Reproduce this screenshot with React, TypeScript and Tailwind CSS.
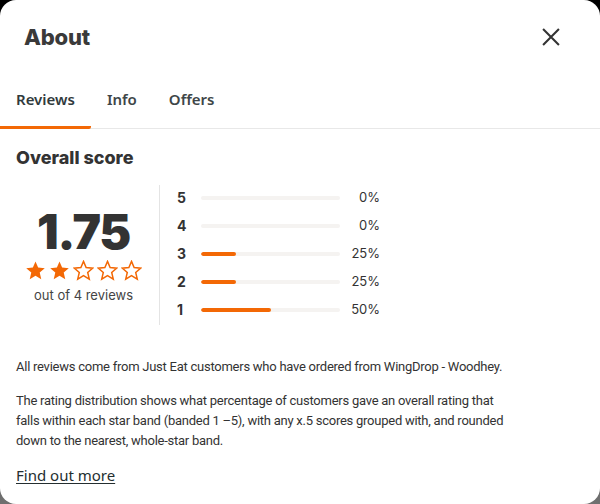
import React from 'react';

const ORANGE = '#f36805';

const Star: React.FC<{ filled: boolean }> = ({ filled }) => (
  <svg width="21" height="21" viewBox="0 0 24 24" className="shrink-0">
    <polygon
      points="12,1.6 15.0,8.7 22.6,9.3 16.8,14.3 18.6,21.9 12,17.9 5.4,21.9 7.2,14.3 1.4,9.3 9.0,8.7"
      fill={filled ? ORANGE : 'none'}
      stroke={ORANGE}
      strokeWidth={filled ? 0 : 1.7}
      strokeLinejoin="miter"
    />
  </svg>
);

const rows = [
  { band: 5, pct: 0 },
  { band: 4, pct: 0 },
  { band: 3, pct: 25 },
  { band: 2, pct: 25 },
  { band: 1, pct: 50 },
];

export default function App() {
  return (
    <div className="w-[600px] h-[504px] bg-gradient-to-b from-black to-[#707070]">
      <div
        className="w-full h-full bg-white rounded-[16px] flex flex-col text-[#242e30]"
        style={{ fontFamily: 'Roboto, sans-serif' }}
      >
        <div className="flex items-center justify-between pl-6 pr-[40px] h-[74px]">
          <h1 className="text-[22px] font-extrabold tracking-[-0.2px] text-[#3a3a3a]" style={{ fontFamily: 'Inter, sans-serif' }}>
            About
          </h1>
          <svg width="18" height="18" viewBox="0 0 20 20" className="text-[#333]">
            <path d="M2 2 L18 18 M18 2 L2 18" stroke="currentColor" strokeWidth="2.3" strokeLinecap="square" />
          </svg>
        </div>

        <div className="flex border-b border-[#e8e8e8] mt-[10px]" style={{ fontFamily: '"Noto Sans", sans-serif' }}>
          <div className="px-4 pt-[4px] pb-[15px] text-[15px] font-semibold text-[#303a3c] border-b-[3px] border-[#f36805] rounded-r-[2px] -mb-px">
            Reviews
          </div>
          <div className="px-4 pt-[4px] pb-[15px] text-[15px] font-semibold text-[#3e4648]">Info</div>
          <div className="px-4 pt-[4px] pb-[15px] text-[15px] font-semibold text-[#3e4648]">Offers</div>
        </div>

        <div className="px-4 pt-[18px]">
          <h2 className="text-[18px] font-extrabold text-[#333] leading-[22px]" style={{ fontFamily: 'Inter, sans-serif' }}>
            Overall score
          </h2>

          <div className="flex mt-[16px]">
            <div className="w-[144px] pr-[8px] flex flex-col items-center justify-center border-r border-[#e4e4e4] h-[140px]">
              <div className="text-[48px] font-black leading-[48px] tracking-[-1.2px] text-[#333] mt-[4px]" style={{ fontFamily: 'Inter, sans-serif' }}>
                1.75
              </div>
              <div className="flex gap-[3px] mt-[4px]">
                {[0, 1, 2, 3, 4].map(i => (
                  <Star key={i} filled={i < 2} />
                ))}
              </div>
              <div className="text-[13px] text-[#444] mt-[5px]" style={{ fontFamily: 'Inter, sans-serif' }}>
                out of 4 reviews
              </div>
            </div>

            <div className="flex flex-col justify-center gap-[12px] pl-[17px] -mt-[2px]" style={{ fontFamily: 'Inter, sans-serif' }}>
              {rows.map(r => (
                <div key={r.band} className="flex items-center h-[16px]">
                  <span className="w-[24px] text-[14px] font-bold text-[#333]">{r.band}</span>
                  <div className="w-[139px] h-[4px] rounded-full bg-[#f5f3f1] overflow-hidden">
                    <div className="h-full rounded-full bg-[#f36805]" style={{ width: `${r.pct}%` }} />
                  </div>
                  <span className="w-[40px] text-right text-[13px] text-[#333]">{r.pct}%</span>
                </div>
              ))}
            </div>
          </div>

          <p className="text-[13px] leading-[20px] tracking-[-0.25px] text-[#333] mt-[32px]">
            All reviews come from Just Eat customers who have ordered from WingDrop - Woodhey.
          </p>
          <p className="text-[13px] leading-[20px] tracking-[-0.25px] text-[#333] mt-[14px] max-w-[500px]">
            The rating distribution shows what percentage of customers gave an overall rating that falls within each star band (banded 1 –5), with any x.5 scores grouped with, and rounded down to the nearest, whole-star band.
          </p>
          <a className="inline-block mt-[13px] text-[15px] text-[#242e30] underline underline-offset-2" style={{ fontFamily: '"Noto Sans", sans-serif' }}>
            Find out more
          </a>
        </div>
      </div>
    </div>
  );
}
